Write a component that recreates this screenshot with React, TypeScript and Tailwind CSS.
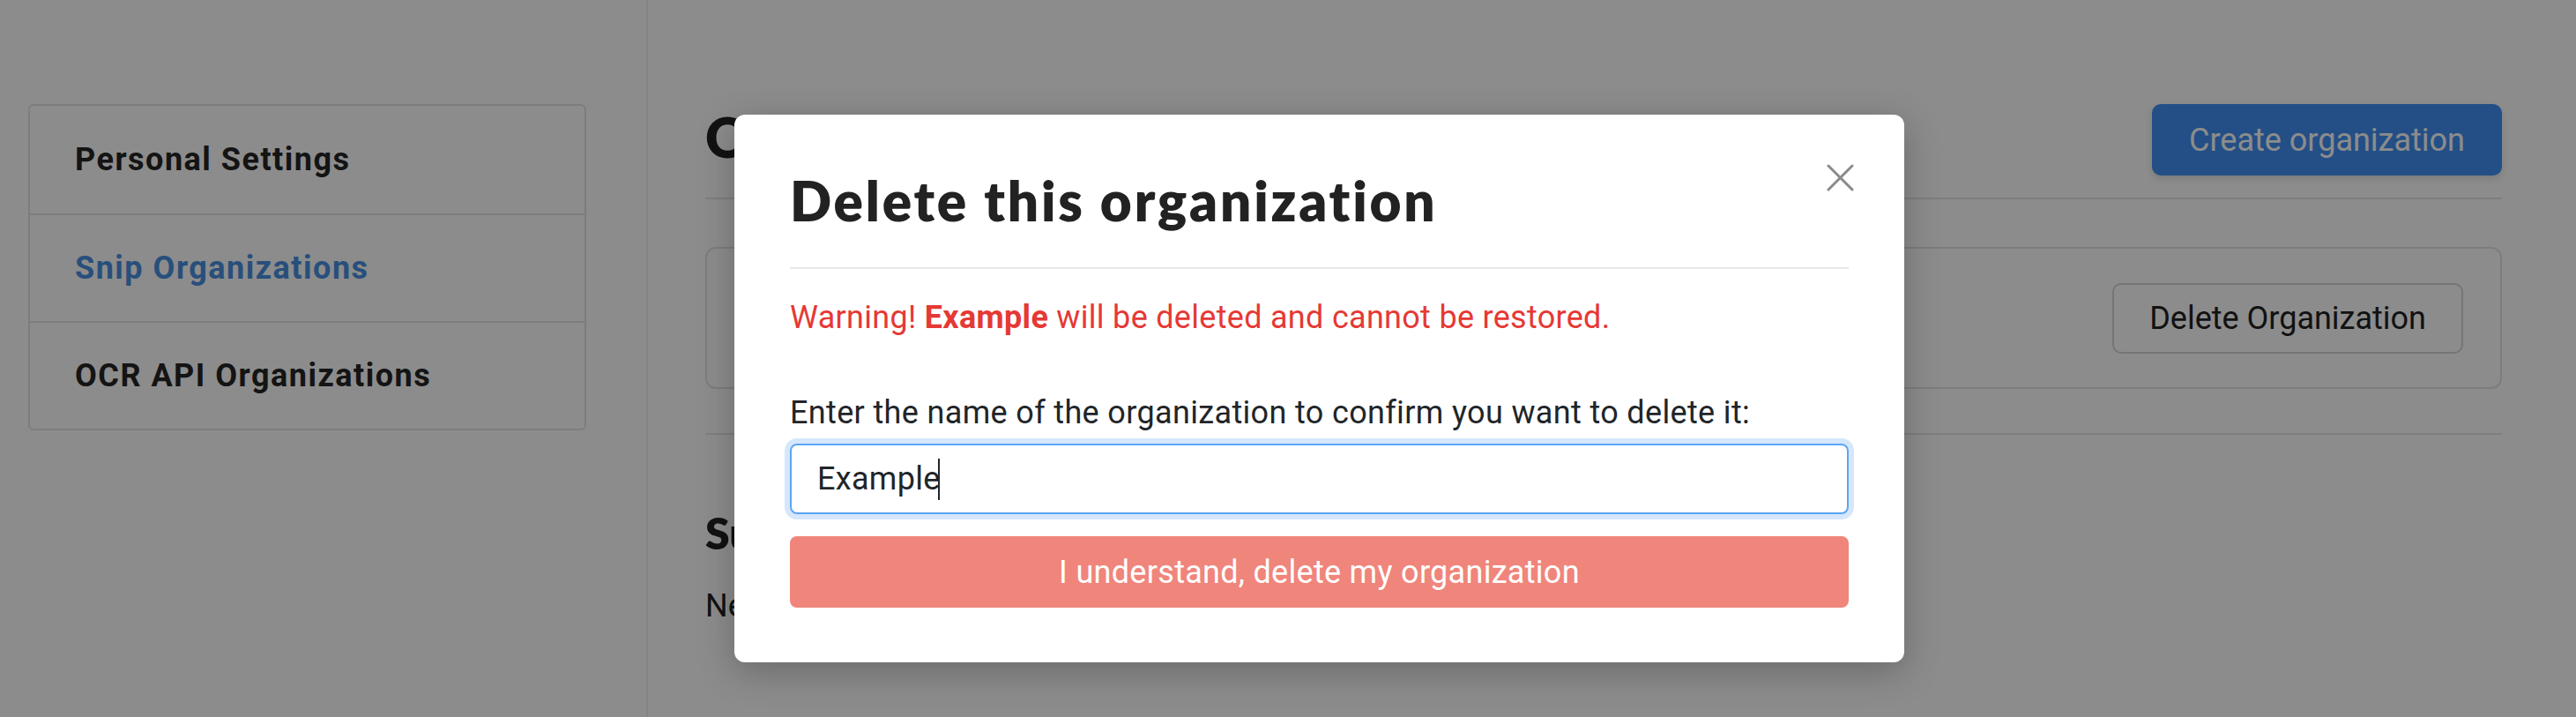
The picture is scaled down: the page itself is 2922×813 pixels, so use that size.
import React from "react";

const NAV_ITEMS: { label: string; active?: boolean }[] = [
  { label: "Personal Settings" },
  { label: "Snip Organizations", active: true },
  { label: "OCR API Organizations" },
];

// Heading face stands in for Poppins, body face for IBM Plex Sans
const HEADING = "font-['Lato',sans-serif] font-extrabold";

const CloseIcon: React.FC = () => (
  <svg width="31" height="31" viewBox="0 0 31 31" fill="none">
    <path d="M2 2 L29 29 M29 2 L2 29" stroke="#8a8a8a" strokeWidth="3" strokeLinecap="round" />
  </svg>
);

const App: React.FC = () => {
  return (
    <div className="relative min-h-[813px] w-full overflow-hidden bg-white font-['Roboto',sans-serif] text-[#222]">
      {/* Page */}
      <div className="flex min-h-[813px]">
        <aside className="w-[735px] shrink-0 border-r-2 border-[#efefef] pl-8 pr-[68px] pt-[118px]">
          <nav className="flex flex-col rounded-md border-2 border-[#e4e4e4]">
            {NAV_ITEMS.map((item, i) => (
              <div
                key={item.label}
                className={`flex h-[122px] items-center pl-[51px] text-[36px] font-bold tracking-[1.5px] ${
                  i > 0 ? "border-t-2 border-[#e4e4e4]" : ""
                } ${item.active ? "text-[#4a90e2]" : "text-[#262626]"}`}
              >
                {item.label}
              </div>
            ))}
          </nav>
        </aside>

        <main className="flex-1 pl-[65px] pr-[84px] pt-[118px]">
          <div className="flex items-start justify-between border-b-2 border-[#e6e6e6] pb-[25px]">
            <h1 className={`${HEADING} pt-[6px] text-[62px] leading-none`}>Organizations</h1>
            <button className="h-[81px] rounded-[10px] bg-[#4090f4] px-[42px] text-[36px] text-white shadow-[0_4px_8px_rgba(0,0,0,0.12)]">
              Create organization
            </button>
          </div>

          <div className="mt-[54px] flex h-[161px] items-center justify-end rounded-[12px] border-2 border-[#e4e4e4] px-[42px]">
            <button className="h-[80px] rounded-[10px] border-2 border-[#d6d6d6] px-[40px] text-[36px] text-[#222]">
              Delete Organization
            </button>
          </div>

          <div className="mt-[50px] border-t-2 border-[#e6e6e6]" />

          <h2 className={`${HEADING} mt-[86px] text-[50px] leading-none`}>Subscription</h2>
          <p className="mt-[40px] text-[36px] leading-none">Need more seats?</p>
        </main>
      </div>

      {/* Overlay */}
      <div className="absolute inset-0 bg-black/45" />

      {/* Modal */}
      <div className="absolute left-[833px] top-[130px] w-[1327px] rounded-[12px] bg-white px-[63px] pb-[62px] pt-[66px] shadow-[0_10px_40px_rgba(0,0,0,0.25)]">
        <button className="absolute right-[57px] top-[56px]">
          <CloseIcon />
        </button>

        <h2 className={`${HEADING} text-[62px] leading-none tracking-[2.8px] text-[#222]`}>
          Delete this organization
        </h2>
        <div className="mt-[45px] h-[2px] bg-[#e8e8e8]" />

        <p className="mt-[37px] text-[36px] leading-none tracking-[0.3px] text-[#e53935]">
          Warning! <span className="font-bold">Example</span> will be deleted and cannot be restored.
        </p>

        <label className="mt-[72px] block text-[36px] leading-none tracking-[0.35px] text-[#212529]">
          Enter the name of the organization to confirm you want to delete it:
        </label>

        <div className="relative mt-[17px]">
          <input
            readOnly
            value="Example"
            className="block h-[80px] w-full rounded-[8px] border-2 border-[#5ba4f5] px-[29px] text-[36px] tracking-[0.3px] text-[#212529] shadow-[0_0_0_6px_#d6e7fc] outline-none"
          />
          {/* text caret */}
          <span className="pointer-events-none absolute left-[168px] top-[17px] h-[47px] w-[2px] bg-[#212529]" />
        </div>

        <button className="mt-[25px] h-[81px] w-full rounded-[8px] bg-[#f0857b] text-[36px] tracking-[0.3px] text-white">
          I understand, delete my organization
        </button>
      </div>
    </div>
  );
};

export default App;
